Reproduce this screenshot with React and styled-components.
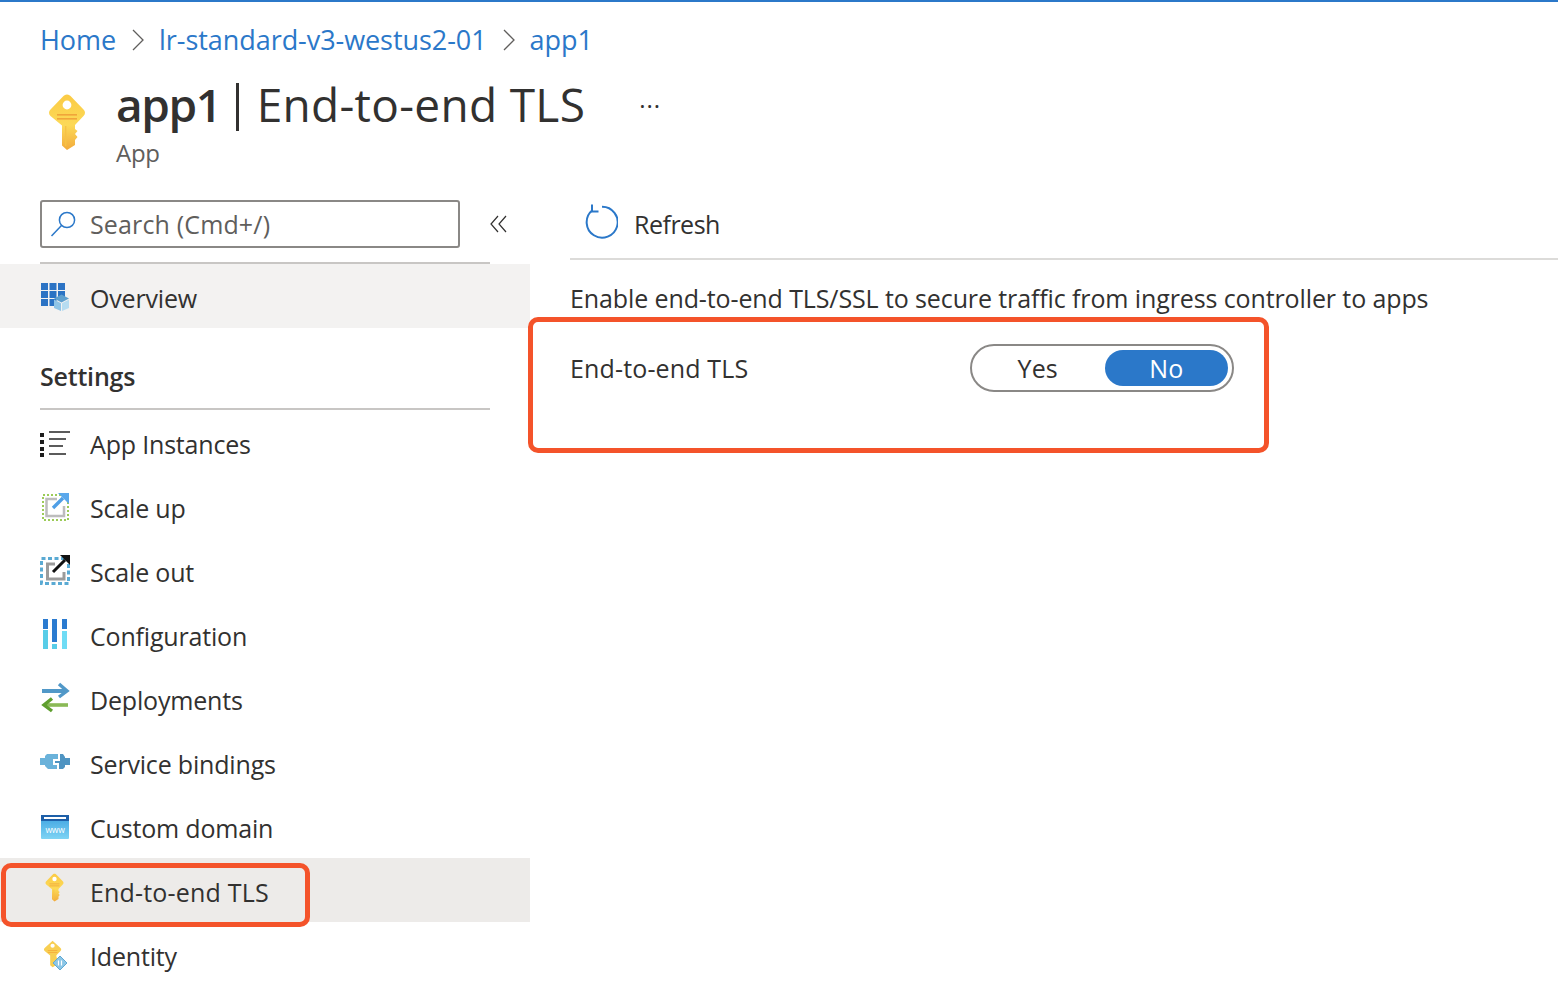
import React from "react";
import styled, { createGlobalStyle } from "styled-components";

const Global = createGlobalStyle`
  html, body { margin: 0; padding: 0; background: #fff; }
  body { font-family: "Open Sans", "Noto Sans", "Liberation Sans", sans-serif; color: #323130; }
  * { box-sizing: border-box; }
`;

const Page = styled.div`
  position: relative;
  width: 1558px;
  height: 1006px;
  overflow: hidden;
  border-top: 2px solid #2b78c9;
`;
const Breadcrumb = styled.nav`
  display: flex;
  align-items: center;
  height: 50px;
  margin-top: 13px;
  padding-left: 40px;
  font-size: 27px;
  letter-spacing: -0.06px;
  color: #2b78c9;
`;
const Crumb = styled.span`
  line-height: 50px;
`;
const CrumbSep = styled.svg`
  width: 14px;
  height: 24px;
  margin: 0 14px 0 15px;
`;
const Header = styled.header`
  display: flex;
  height: 99px;
  padding-left: 46px;
`;
const HeaderIcon = styled.div`
  width: 42px;
  margin-top: 28px;
`;
const TitleBlock = styled.div`
  margin-left: 28px;
`;
const TitleRow = styled.div`
  display: flex;
  align-items: center;
  height: 60px;
  margin-top: 9px;
`;
const Title = styled.h1`
  margin: 0;
  font-size: 46px;
  font-weight: 400;
  letter-spacing: 0.3px;
  line-height: 60px;
  color: #323130;
  b { font-weight: 600; letter-spacing: -1.4px; }
`;
const TitleBar = styled.span`
  display: inline-block;
  width: 3px;
  height: 48px;
  margin: 0 18px 0 15px;
  background: #323130;
  vertical-align: -9px;
`;
const More = styled.span`
  margin-left: 54px;
  margin-top: 4px;
  font-size: 24px;
  line-height: 24px;
  letter-spacing: 1px;
`;
const Subtitle = styled.div`
  font-size: 24px;
  line-height: 28px;
  color: #605e5c;
  margin-top: 5px;
  letter-spacing: -0.3px;
`;
const Main = styled.div`
  display: flex;
  margin-top: 36px;
`;
const Sidebar = styled.aside`
  width: 530px;
  flex: none;
`;
const SearchRow = styled.div`
  display: flex;
  align-items: center;
  height: 48px;
  padding-left: 40px;
`;
const SearchBox = styled.div`
  display: flex;
  align-items: center;
  width: 420px;
  height: 48px;
  border: 2px solid #8a8886;
  border-radius: 3px;
  padding-left: 8px;
  font-size: 25px;
  letter-spacing: 0.15px;
  color: #605e5c;
  gap: 12px;
`;
const Collapse = styled.svg`
  width: 18px;
  height: 18px;
  margin-left: 30px;
`;
const SideRule = styled.div`
  width: 450px;
  height: 2px;
  margin: 14px 0 0 40px;
  background: #c8c6c4;
`;
const NavRow = styled.div`
  display: flex;
  align-items: center;
  height: 64px;
  padding-left: 40px;
  font-size: 25px;
  letter-spacing: ${(p) => (p.$bg === "#edebe9" ? "0.18px" : "-0.18px")};
  color: #323130;
  background: ${(p) => p.$bg || "transparent"};
`;
const NavIcon = styled.div`
  display: flex;
  justify-content: flex-start;
  align-items: center;
  width: 50px;
  height: 32px;
  margin-top: -2px;
`;
const NavLabel = styled.span`
  padding-top: 4px;
`;
const SectionTitle = styled.div`
  height: 80px;
  padding: 31px 0 0 40px;
  font-size: 25px;
  font-weight: 600;
  letter-spacing: -0.2px;
  line-height: 34px;
  color: #323130;
`;
const SectionRule = styled.div`
  width: 450px;
  height: 2px;
  margin-left: 40px;
  background: #c8c6c4;
`;
const Content = styled.section`
  flex: 1;
  padding-left: 40px;
`;
const Toolbar = styled.div`
  display: flex;
  align-items: center;
  height: 60px;
  padding: 0 0 14px 12px;
  border-bottom: 2px solid #dcdbd9;
  font-size: 25px;
  letter-spacing: -0.5px;
  color: #323130;
  gap: 16px;
`;
const ToolLabel = styled.span`
  padding-top: 4px;
`;
const Description = styled.p`
  margin: 20px 0 0;
  font-size: 25px;
  line-height: 36px;
  letter-spacing: -0.11px;
  color: #323130;
`;
const Field = styled.div`
  display: flex;
  align-items: center;
  margin-top: 28px;
  height: 48px;
  font-size: 25px;
  letter-spacing: 0.15px;
`;
const FieldLabel = styled.span`
  width: 400px;
`;
const Toggle = styled.div`
  display: flex;
  align-items: center;
  width: 264px;
  height: 48px;
  border: 2px solid #8a8886;
  border-radius: 24px;
  padding: 0 4px;
`;
const Option = styled.div`
  display: flex;
  align-items: center;
  justify-content: center;
  width: 124px;
  height: 36px;
  margin-left: ${(p) => p.$ml || 0}px;
  border-radius: 18px;
  background: ${(p) => (p.$on ? "#2b78c9" : "transparent")};
  color: ${(p) => (p.$on ? "#fff" : "#323130")};
`;
const Callout = styled.div`
  position: absolute;
  border: 5px solid #f4532a;
  border-radius: 10px;
  left: ${(p) => p.$x}px;
  top: ${(p) => p.$y}px;
  width: ${(p) => p.$w}px;
  height: ${(p) => p.$h}px;
`;
const KeyWrap = styled.div`
  margin: 4px 0 0 4px;
`;

const KeyIcon = ({ id, w = 42, h = 58 }) => (
  <svg width={w} height={h} viewBox="0 0 42 58">
    <defs>
      <linearGradient id={id} x1="0" y1="0" x2="0" y2="1">
        <stop offset="0" stopColor="#fbcb45" />
        <stop offset="0.55" stopColor="#fcd957" />
        <stop offset="1" stopColor="#f2ab3c" />
      </linearGradient>
    </defs>
    <path
      d="M21 1.5 C23 1.5 24 2.5 25 3.6 L37.5 16.5 C39.5 18.5 39.5 21 37.5 23 L29 32 V36 L31.5 38 L29 41 L31.5 44 L29 47 V52 L21 57 L16 52.5 V32.5 L4.5 23 C2.5 21 2.5 18.5 4.5 16.5 L17 3.6 C18 2.5 19 1.5 21 1.5 Z"
      fill={`url(#${id})`}
    />
    <circle cx="21" cy="12" r="4.4" fill="#fff" />
    <rect x="11" y="21" width="20" height="1.6" fill="#f0a53a" />
    <rect x="11" y="25" width="20" height="1.6" fill="#f0a53a" />
    <rect x="19" y="33" width="1.4" height="20" fill="#f7c244" />
  </svg>
);

const OverviewIcon = () => (
  <svg width="30" height="32" viewBox="0 0 30 32">
    {[0, 1, 2].map((r) =>
      [0, 1, 2].map((c) =>
        r === 2 && c === 2 ? null : (
          <rect key={`${r}${c}`} x={1 + c * 8.5} y={4 + r * 8} width="7" height="7" fill="#2b73c4" />
        )
      )
    )}
    <path d="M21.5 15.5 L29 19.5 L21.5 23.5 L14 19.5Z" fill="#5ea0cf" />
    <path d="M14 20.5 L21 24.2 V32 L14 29Z" fill="#8fc4e6" />
    <path d="M29 20.5 L22 24.2 V32 L29 29Z" fill="#b6dcf1" />
  </svg>
);
const ListIcon = () => (
  <svg width="30" height="32" viewBox="0 0 30 32">
    <g fill="#1d1d1d">
      <rect x="0" y="8" width="4" height="4" />
      <rect x="0" y="15" width="4" height="4" />
      <rect x="0" y="22" width="4" height="4" />
      <rect x="0" y="28" width="4" height="4" />
    </g>
    <g stroke="#333" strokeWidth="1.6">
      <path d="M9 7 H30" />
      <path d="M9 14 H26" />
      <path d="M9 21 H23" />
      <path d="M9 29 H26" />
    </g>
  </svg>
);
const ScaleUpIcon = () => (
  <svg width="30" height="32" viewBox="0 0 30 32">
    <rect x="3" y="6" width="25" height="25" fill="none" stroke="#9ccb58" strokeWidth="2" strokeDasharray="2 2" />
    <path d="M17 10 H6.5 V27 H24 V17" fill="none" stroke="#bdbdbd" strokeWidth="2.5" />
    <path d="M13 19 L23 9" stroke="#4f9fe6" strokeWidth="3.4" fill="none" />
    <path d="M18 4 H29 V15 Z" fill="#5aa8ec" />
  </svg>
);
const ScaleOutIcon = () => (
  <svg width="32" height="32" viewBox="0 0 32 32">
    <rect x="1.5" y="5.5" width="27" height="25" fill="none" stroke="#5aaad3" strokeWidth="3" strokeDasharray="4 2.5" />
    <path d="M15 11 H7.5 V26 H24 V19" fill="none" stroke="#9b9b9b" strokeWidth="3" />
    <path d="M13 19 L25 7" stroke="#111" strokeWidth="3" fill="none" />
    <path d="M20 2 H30 V12 Z" fill="#111" />
  </svg>
);
const ConfigIcon = () => (
  <svg width="30" height="32" viewBox="0 0 30 32">
    <rect x="3" y="2" width="5" height="10" fill="#2b7bd0" />
    <rect x="3" y="13" width="5" height="19" fill="#58cde8" />
    <rect x="12" y="2" width="5" height="23" fill="#2b7bd0" />
    <rect x="12" y="27" width="5" height="5" fill="#58cde8" />
    <rect x="22" y="2" width="5" height="10" fill="#2b7bd0" />
    <rect x="22" y="14" width="5" height="18" fill="#6fdcf5" />
  </svg>
);
const DeployIcon = () => (
  <svg width="30" height="32" viewBox="0 0 30 32">
    <path d="M2 10 H25" stroke="#5198c8" strokeWidth="4" fill="none" />
    <path d="M19 3 L27 10 L19 16" stroke="#5198c8" strokeWidth="3.4" fill="none" />
    <path d="M28 24 H6" stroke="#8ab956" strokeWidth="3.6" fill="none" />
    <path d="M12 17.5 L4 24 L12 30" stroke="#5e9e2e" strokeWidth="3.4" fill="none" />
  </svg>
);
const BindingIcon = () => (
  <svg width="30" height="18" viewBox="0 0 30 18">
    <path d="M0 6 H5 V4 L7 2 H18 V7 H13 V13 H17 V17 H8 L5 14 V13 H0Z" fill="#6ab2da" />
    <path d="M20 2 H23 L25 5 V6 H30 V13 H25 V15 L23 17 H19 V11 H15 V9 H20Z" fill="#4f94c2" />
  </svg>
);
const DomainIcon = () => (
  <svg width="30" height="32" viewBox="0 0 30 32">
    <defs>
      <linearGradient id="dom" x1="0" y1="0" x2="0" y2="1">
        <stop offset="0" stopColor="#3aa0e0" />
        <stop offset="1" stopColor="#7fd4f4" />
      </linearGradient>
    </defs>
    <rect x="1" y="6" width="28" height="24" rx="1" fill="url(#dom)" />
    <rect x="1" y="6" width="28" height="6" fill="#1d5fa8" />
    <rect x="4" y="8" width="22" height="2" fill="#fff" />
    <text x="15" y="24" fontSize="8.5" fontFamily="Open Sans, sans-serif" fill="#fff" textAnchor="middle">www</text>
  </svg>
);
const IdentityIcon = () => (
  <svg width="28" height="36" viewBox="0 0 28 36">
    <g transform="translate(2.5 5) scale(0.48)">
      <path
        d="M21 1.5 L37.5 16.5 C39.5 18.5 39.5 21 37.5 23 L29 32 V36 L31.5 38 L29 41 L31.5 44 L29 47 V52 L21 57 L16 52.5 V32.5 L4.5 23 C2.5 21 2.5 18.5 4.5 16.5Z"
        fill="#f8cf52"
      />
      <circle cx="21" cy="12" r="4.4" fill="#fff" />
      <rect x="11" y="21" width="20" height="1.6" fill="#f5a83a" />
      <rect x="11" y="25" width="20" height="1.6" fill="#f5a83a" />
    </g>
    <path d="M20 21 L27 28 L20 35 L13 28Z" fill="#8cc6e6" stroke="#5fa9d4" strokeWidth="1" />
    <path d="M18.5 25.5 V30.5 M21.5 25.5 V30.5" stroke="#fff" strokeWidth="1.2" />
  </svg>
);

const items = [
  ["App Instances", <ListIcon />],
  ["Scale up", <ScaleUpIcon />],
  ["Scale out", <ScaleOutIcon />],
  ["Configuration", <ConfigIcon />],
  ["Deployments", <DeployIcon />],
  ["Service bindings", <BindingIcon />],
  ["Custom domain", <DomainIcon />],
  ["End-to-end TLS", <KeyWrap><KeyIcon id="navkey" w={21} h={29} /></KeyWrap>, "#edebe9"],
  ["Identity", <IdentityIcon />],
];

const Chevron = () => (
  <CrumbSep viewBox="0 0 14 24">
    <path d="M2 2 L12 12 L2 22" fill="none" stroke="#605e5c" strokeWidth="1.3" />
  </CrumbSep>
);

export default function App() {
  return (
    <Page>
      <Global />
      <Breadcrumb>
        <Crumb>Home</Crumb>
        <Chevron />
        <Crumb>lr-standard-v3-westus2-01</Crumb>
        <Chevron />
        <Crumb>app1</Crumb>
      </Breadcrumb>
      <Header>
        <HeaderIcon>
          <KeyIcon id="headkey" />
        </HeaderIcon>
        <TitleBlock>
          <TitleRow>
            <Title>
              <b>app1</b>
              <TitleBar />
              End-to-end TLS
            </Title>
            <More>···</More>
          </TitleRow>
          <Subtitle>App</Subtitle>
        </TitleBlock>
      </Header>
      <Main>
        <Sidebar>
          <SearchRow>
            <SearchBox>
              <svg width="28" height="28" viewBox="0 0 28 28">
                <circle cx="17" cy="10" r="7.6" fill="none" stroke="#2b78c9" strokeWidth="1.5" />
                <path d="M11.5 15.5 L1.5 26" stroke="#2b78c9" strokeWidth="1.5" fill="none" />
              </svg>
              Search (Cmd+/)
            </SearchBox>
            <Collapse viewBox="0 0 18 18">
              <path d="M8 1 L1 9 L8 17 M16 1 L9 9 L16 17" fill="none" stroke="#323130" strokeWidth="1.2" />
            </Collapse>
          </SearchRow>
          <SideRule />
          <NavRow $bg="#f3f2f1">
            <NavIcon>
              <OverviewIcon />
            </NavIcon>
            <NavLabel>Overview</NavLabel>
          </NavRow>
          <SectionTitle>Settings</SectionTitle>
          <SectionRule />
          {items.map(([label, icon, bg]) => (
            <NavRow key={label} $bg={bg}>
              <NavIcon>{icon}</NavIcon>
              <NavLabel>{label}</NavLabel>
            </NavRow>
          ))}
        </Sidebar>
        <Content>
          <Toolbar>
            <svg width="36" height="36" viewBox="0 0 36 36">
              <path d="M10 6.5 A15.5 15.5 0 1 0 20 2.7" fill="none" stroke="#2b78c9" strokeWidth="2" />
              <path d="M10 0.5 V7.5 H16.5" fill="none" stroke="#2b78c9" strokeWidth="2" />
            </svg>
            <ToolLabel>Refresh</ToolLabel>
          </Toolbar>
          <Description>Enable end-to-end TLS/SSL to secure traffic from ingress controller to apps</Description>
          <Field>
            <FieldLabel>End-to-end TLS</FieldLabel>
            <Toggle>
              <Option>Yes</Option>
              <Option $on $ml={5}>No</Option>
            </Toggle>
          </Field>
        </Content>
      </Main>
      <Callout $x={528} $y={315} $w={741} $h={136} />
      <Callout $x={1} $y={861} $w={309} $h={64} />
    </Page>
  );
}
